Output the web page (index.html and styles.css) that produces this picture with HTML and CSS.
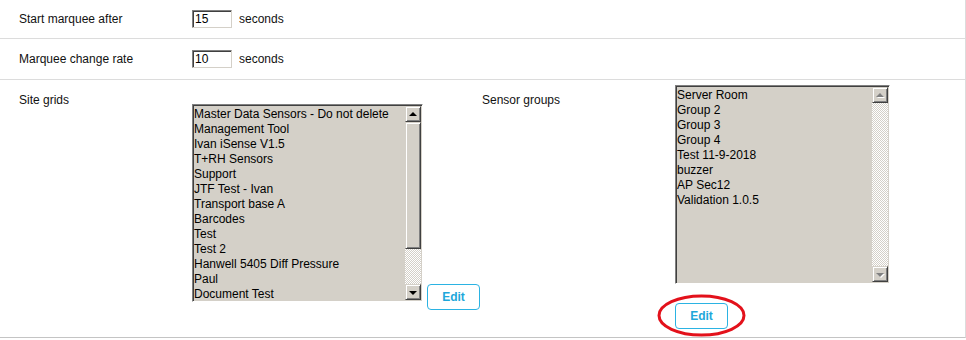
FILE: index.html
```html
<!DOCTYPE html>
<html lang="en">
<head>
  <meta charset="UTF-8">
  <title>Marquee Settings</title>
  <link rel="stylesheet" href="styles.css">
</head>
<body>

  <div class="settings">

    <!-- Timing rows -->
    <div class="row row-first">
      <div class="label">Start marquee after</div>
      <input class="num-input" type="text" value="15">
      <span class="unit">seconds</span>
    </div>

    <div class="row">
      <div class="label">Marquee change rate</div>
      <input class="num-input" type="text" value="10">
      <span class="unit">seconds</span>
    </div>

    <!-- Grids and groups -->
    <div class="row-lists">
      <div class="label label-grids">Site grids</div>

      <div class="grids-block">
        <div class="listbox listbox-grids">
          <div class="list-items">
            <div>Master Data Sensors - Do not delete</div>
            <div>Management Tool</div>
            <div>Ivan iSense V1.5</div>
            <div>T+RH Sensors</div>
            <div>Support</div>
            <div>JTF Test - Ivan</div>
            <div>Transport base A</div>
            <div>Barcodes</div>
            <div>Test</div>
            <div>Test 2</div>
            <div>Hanwell 5405 Diff Pressure</div>
            <div>Paul</div>
            <div>Document Test</div>
          </div>
          <div class="scrollbar">
            <div class="sb-btn"><span class="arrow-up"></span></div>
            <div class="sb-thumb"></div>
            <div class="sb-track"></div>
            <div class="sb-btn"><span class="arrow-down"></span></div>
          </div>
        </div>
        <button class="edit-btn edit-grids">Edit</button>
      </div>

      <div class="label label-groups">Sensor groups</div>

      <div class="groups-block">
        <div class="listbox listbox-groups">
          <div class="list-items">
            <div>Server Room</div>
            <div>Group 2</div>
            <div>Group 3</div>
            <div>Group 4</div>
            <div>Test 11-9-2018</div>
            <div>buzzer</div>
            <div>AP Sec12</div>
            <div>Validation 1.0.5</div>
          </div>
          <div class="scrollbar">
            <div class="sb-btn"><span class="arrow-up disabled"></span></div>
            <div class="sb-track"></div>
            <div class="sb-btn"><span class="arrow-down disabled"></span></div>
          </div>
        </div>
        <div class="edit-wrap">
          <button class="edit-btn">Edit</button>
          <!-- red highlight ring -->
          <svg class="highlight" width="91" height="45" viewBox="0 0 91 45">
            <ellipse cx="45.5" cy="22.5" rx="42.5" ry="19.5" fill="none" stroke="#e3111b" stroke-width="3"/>
          </svg>
        </div>
      </div>
    </div>

  </div>

</body>
</html>
```

FILE: styles.css
```css
/* General Styles */
body {
  margin: 0;
  padding: 0;
  background-color: #fff;
  font-family: "Liberation Sans", Arial, sans-serif;
  font-size: 12px;
  color: #111;
}

.settings {
  width: 965px;
  height: 337px;
  border-right: 1px solid #dcdcdc;
  border-bottom: 1px solid #c4c4c4;
  box-shadow: 0 1px 1px #dcdcdc;
}

/* Timing rows */
.row {
  display: flex;
  align-items: center;
  height: 40px;
  padding-left: 19px;
  border-bottom: 1px solid #dcdcdc;
}

.row-first {
  height: 38px;
}

.label {
  width: 173px;
  flex-shrink: 0;
}

.num-input {
  box-sizing: border-box;
  width: 40px;
  height: 18px;
  margin: 0;
  padding: 0 0 0 2px;
  border: 1px solid;
  border-color: #808080 #d4d0c8 #d4d0c8 #808080;
  box-shadow: inset 1px 1px 0 #404040;
  font-family: "Liberation Sans", Arial, sans-serif;
  font-size: 12px;
  color: #000;
  outline: none;
}

.unit {
  margin-left: 7px;
}

/* Lists row */
.row-lists {
  display: flex;
  align-items: flex-start;
  padding-left: 19px;
}

.label-grids {
  margin-top: 13px;
}

.label-groups {
  width: 193px;
  margin-left: 2px;
  margin-top: 13px;
}

.grids-block {
  display: flex;
  align-items: flex-start;
  margin-top: 24px;
}

.groups-block {
  display: flex;
  flex-direction: column;
  align-items: flex-start;
  margin-top: 5px;
}

/* Classic list box */
.listbox {
  box-sizing: border-box;
  display: flex;
  background-color: #d4d0c8;
  border: 1px solid;
  border-color: #808080 #fff #fff #808080;
  box-shadow: inset 1px 1px 0 #404040, inset -1px -1px 0 #d4d0c8;
  padding: 1px;
  overflow: hidden;
}

.listbox-grids {
  width: 231px;
  height: 198px;
}

.listbox-groups {
  width: 215px;
  height: 199px;
}

.list-items {
  flex: 1;
  padding-top: 1px;
  line-height: 15px;
  color: #000;
  overflow: hidden;
  white-space: nowrap;
}

.scrollbar {
  width: 16px;
  display: flex;
  flex-direction: column;
}

.sb-btn, .sb-thumb {
  box-sizing: border-box;
  background-color: #d4d0c8;
  border: 1px solid;
  border-color: #d4d0c8 #404040 #404040 #d4d0c8;
  box-shadow: inset 1px 1px 0 #fff, inset -1px -1px 0 #808080;
}

.sb-btn {
  height: 16px;
  display: flex;
  align-items: center;
  justify-content: center;
}

.sb-thumb {
  height: 127px;
}

.sb-track {
  flex: 1;
  background: repeating-conic-gradient(#d4d0c8 0 25%, #fff 0 50%) 0 0 / 2px 2px;
}

.arrow-up, .arrow-down {
  width: 0;
  height: 0;
  border-left: 4px solid transparent;
  border-right: 4px solid transparent;
}

.arrow-up {
  border-bottom: 4px solid #000;
  margin-top: -1px;
}

.arrow-down {
  border-top: 4px solid #000;
  margin-top: 1px;
}

.arrow-up.disabled {
  border-bottom-color: #808080;
  filter: drop-shadow(1px 1px 0 #fff);
}

.arrow-down.disabled {
  border-top-color: #808080;
  filter: drop-shadow(1px 1px 0 #fff);
}

/* Edit buttons */
.edit-btn {
  box-sizing: border-box;
  width: 53px;
  height: 26px;
  padding: 0;
  background-color: #fff;
  border: 1px solid #2bb3e3;
  border-radius: 4px;
  color: #1ea7da;
  font-family: "Liberation Sans", Arial, sans-serif;
  font-size: 12px;
  font-weight: bold;
  cursor: pointer;
}

.edit-grids {
  margin-left: 4px;
  margin-top: 180px;
}

.edit-wrap {
  position: relative;
  margin-top: 19px;
}

.highlight {
  position: absolute;
  left: -19px;
  top: -10px;
  pointer-events: none;
}
```
